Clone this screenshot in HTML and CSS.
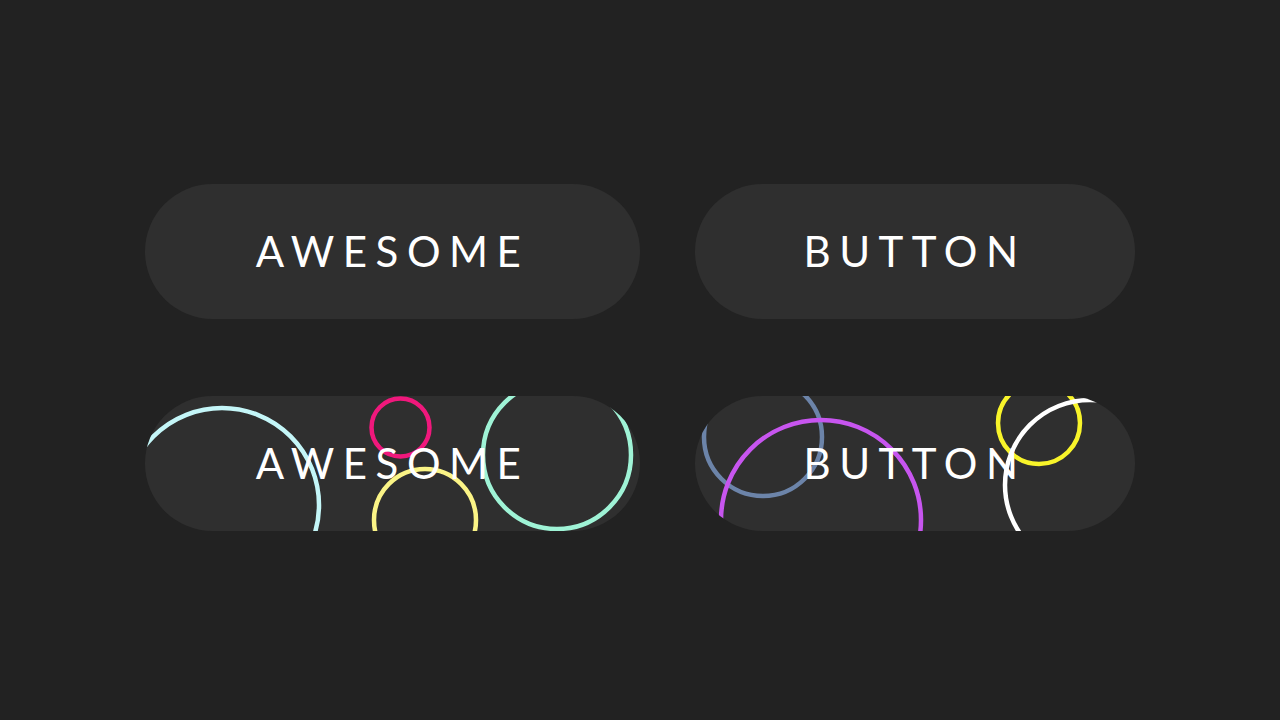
FILE: index.html
```html
<!DOCTYPE html>
<html lang="en">
<head>
<meta charset="utf-8">
<title>Awesome Button</title>
<link rel="stylesheet" href="styles.css">
</head>
<body>
<main class="grid">
  <button class="btn wide"><span class="label">AWESOME</span></button>
  <button class="btn narrow"><span class="label">BUTTON</span></button>
  <button class="btn wide">
    <svg class="bubbles" width="495" height="135" viewBox="0 0 495 135" aria-hidden="true">
      <circle cx="77" cy="109" r="97" stroke="#c4f6f8"/>
      <circle cx="255.5" cy="31.5" r="29" stroke="#f0187c"/>
      <circle cx="280" cy="124" r="51" stroke="#fbf486"/>
      <circle cx="412" cy="59" r="74" stroke="#9ff3d6"/>
    </svg>
    <span class="label">AWESOME</span>
  </button>
  <button class="btn narrow">
    <svg class="bubbles" width="440" height="135" viewBox="0 0 440 135" aria-hidden="true">
      <circle cx="68" cy="41" r="59" stroke="#6c84a9"/>
      <circle cx="126" cy="124" r="100" stroke="#c755ef"/>
      <circle cx="344" cy="27" r="41" stroke="#f8f42a"/>
      <circle cx="395" cy="89" r="85" stroke="#ffffff"/>
    </svg>
    <span class="label">BUTTON</span>
  </button>
</main>
</body>
</html>
```
FILE: styles.css
```css
html, body {
  margin: 0;
  padding: 0;
  background: #222222;
  width: 1280px;
  height: 720px;
  overflow: hidden;
}

.grid {
  display: grid;
  grid-template-columns: 495px 440px;
  grid-auto-rows: 135px;
  column-gap: 55px;
  row-gap: 77px;
  justify-content: center;
  padding-top: 184px;
}

.btn {
  position: relative;
  overflow: hidden;
  border: none;
  margin: 0;
  padding: 0;
  border-radius: 68px;
  background: #2f2f2f;
  display: flex;
  align-items: center;
  justify-content: center;
  font-family: "Lato", "Noto Sans", sans-serif;
  font-size: 42px;
  font-weight: 400;
  color: #ffffff;
  cursor: pointer;
}

.label {
  position: relative;
  z-index: 1;
  letter-spacing: 8.5px;
  padding-left: 0;
  line-height: 1;
  margin-top: -2px;
}

.bubbles {
  position: absolute;
  left: 0;
  top: 0;
  fill: none;
  stroke-width: 4.5;
}
```
